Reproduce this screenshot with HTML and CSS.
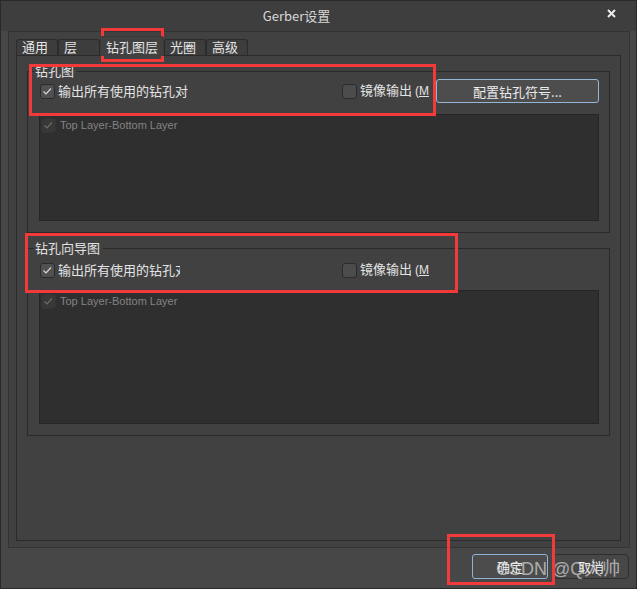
FILE: index.html
```html
<!DOCTYPE html>
<html>
<head>
<meta charset="utf-8">
<link rel="stylesheet" href="styles.css">
</head>
<body>
<div class="stage">
  <div class="win">
    <div class="titlebar">
      <div class="title">Gerber设置</div>
      <div class="close"><svg width="9" height="9" viewBox="0 0 9 9"><path d="M1 1L8 8M8 1L1 8" stroke="#ececec" stroke-width="2" fill="none"/></svg></div>
    </div>
    <div class="outer">
      <div class="tabs">
        <div class="tab">通用</div>
        <div class="tab">层</div>
        <div class="tab wide active">钻孔图层</div>
        <div class="tab">光圈</div>
        <div class="tab">高级</div>
      </div>
      <div class="pane">
        <fieldset class="group g1">
          <legend>钻孔图</legend>
          <div class="inner">
            <div class="row r1">
              <div class="item1">
                <span class="cb on"><svg width="13" height="13" viewBox="0 0 13 13"><path d="M2.5 6.5L5 9L10 3.5" stroke="#d6d6d6" stroke-width="1.2" fill="none"/></svg></span>
                <span class="lbl">输出所有使用的钻孔对</span>
              </div>
              <div class="item2">
                <span class="cb"></span>
                <span class="lbl">镜像输出 <span class="lat">(<u>M</u>)</span></span>
              </div>
              <div class="btn cfg">配置钻孔符号...</div>
            </div>
            <div class="list l1">
              <div class="li">
                <span class="cb dis"><svg width="13" height="13" viewBox="0 0 13 13"><path d="M2.5 6.5L5 9L10 3.5" stroke="#6c6c6c" stroke-width="1.2" fill="none"/></svg></span>
                <span class="litext">Top Layer-Bottom Layer</span>
              </div>
            </div>
          </div>
        </fieldset>
        <fieldset class="group g2">
          <legend>钻孔向导图</legend>
          <div class="inner">
            <div class="row r2">
              <div class="item1">
                <span class="cb on"><svg width="13" height="13" viewBox="0 0 13 13"><path d="M2.5 6.5L5 9L10 3.5" stroke="#d6d6d6" stroke-width="1.2" fill="none"/></svg></span>
                <span class="lbl clip">输出所有使用的钻孔对</span>
              </div>
              <div class="item2">
                <span class="cb"></span>
                <span class="lbl">镜像输出 <span class="lat">(<u>M</u>)</span></span>
              </div>
            </div>
            <div class="list l2">
              <div class="li">
                <span class="cb dis"><svg width="13" height="13" viewBox="0 0 13 13"><path d="M2.5 6.5L5 9L10 3.5" stroke="#6c6c6c" stroke-width="1.2" fill="none"/></svg></span>
                <span class="litext">Top Layer-Bottom Layer</span>
              </div>
            </div>
          </div>
        </fieldset>
      </div>
    </div>
    <div class="footer">
      <div class="btn ok">确定</div>
      <div class="btn cancel">取消</div>
    </div>
  </div>
  <div class="watermark">CSDN @Q大帅</div>
  <div class="mark m-tab"></div>
  <div class="mark m-g1"></div>
  <div class="mark m-g2"></div>
  <div class="mark m-ok"></div>
</div>
</body>
</html>
```
FILE: styles.css
```css
html, body {
  margin: 0;
  padding: 0;
  background: #474747;
}
body {
  font-family: "Noto Sans CJK SC", "Noto Sans", sans-serif;
  font-size: 13px;
  color: #e2e2e2;
}
.stage {
  position: relative;
  width: 637px;
  height: 589px;
  overflow: hidden;
}
.win {
  width: 637px;
  height: 589px;
  box-sizing: border-box;
  border: 1px solid #2a2a2a;
  background: #474747;
  display: flex;
  flex-direction: column;
}
.titlebar {
  height: 30px;
  flex: none;
  display: flex;
  align-items: center;
  background: #3e3e3e;
}
.title {
  flex: 1;
  text-align: center;
  color: #d8d8d8;
  line-height: 16px;
  padding-bottom: 1px;
}
.close {
  width: 44px;
  box-sizing: border-box;
  padding-left: 15px;
  display: flex;
  align-items: center;
  padding-bottom: 5px;
}
.outer {
  flex: none;
  height: 517px;
  box-sizing: border-box;
  margin: 0 6px 0 7px;
  border: 1px solid #333333;
  background: #414141;
  padding: 7px 8px 6px 7px;
  display: flex;
  flex-direction: column;
}
.tabs {
  height: 16px;
  flex: none;
  display: flex;
  align-items: flex-end;
  position: relative;
  z-index: 1;
}
.tab {
  width: 42px;
  height: 16px;
  box-sizing: border-box;
  border: 1px solid #2b2b2b;
  border-bottom: none;
  border-radius: 3px 3px 0 0;
  background: #3d3d3d;
  padding-left: 5px;
  line-height: 14px;
  color: #e4e4e4;
  white-space: nowrap;
}
.tab.wide {
  width: 64px;
}
.tab.active {
  height: 20px;
  margin-bottom: -1px;
  background: #414141;
  border-color: #3a3a3a;
  line-height: 18px;
  padding-top: 1px;
}
.pane {
  flex: 1;
  box-sizing: border-box;
  border: 1px solid #2b2b2b;
  background: #414141;
  padding: 7px 10px 0 10px;
}
.group {
  margin: 0;
  border: 1px solid #2a2a2a;
  padding: 0 10px 11px 6px;
  min-width: 0;
}
.group legend {
  padding: 0 3px 0 1px;
  line-height: 15px;
  height: 16px;
  color: #e2e2e2;
}
.g2 {
  margin-top: 7px;
}
.inner {
  margin-left: 5px;
}
.row {
  display: flex;
  align-items: center;
  height: 24px;
}
.r1 {
  margin-top: 0;
}
.r2 {
  margin-top: 2px;
}
.item1 {
  width: 302px;
  margin-left: 1px;
  display: flex;
  align-items: center;
}
.item2 {
  width: 87px;
  overflow: hidden;
  display: flex;
  align-items: center;
  white-space: nowrap;
}
.cb {
  flex: none;
  width: 15px;
  height: 15px;
  box-sizing: border-box;
  border: 1px solid #2b2b2b;
  border-radius: 3px;
  background: #4c4c4c;
  margin-right: 3px;
  display: flex;
  align-items: center;
  justify-content: center;
}
.cb.on {
  background: #505050;
}
.cb.dis {
  background: #383838;
  border-color: #343434;
  margin-right: 4px;
}
.lbl {
  line-height: 15px;
  padding-bottom: 1px;
  white-space: nowrap;
  color: #e4e4e4;
}
.lbl.clip {
  display: block;
  width: 122px;
  overflow: hidden;
}
.lat {
  font-family: "Liberation Sans", sans-serif;
  font-size: 12px;
}
.btn {
  box-sizing: border-box;
  height: 24px;
  border-radius: 3px;
  display: flex;
  align-items: center;
  justify-content: center;
  color: #ececec;
}
.cfg {
  width: 163px;
  margin-left: 7px;
  border: 1px solid #94b6d8;
  background: #4d4d4d;
}
.list {
  box-sizing: border-box;
  border: 1px solid #262626;
  background: #2f2f2f;
  padding: 2px 0 0 1px;
}
.l1 {
  margin-top: 11px;
  height: 107px;
}
.l2 {
  margin-top: 8px;
  height: 134px;
}
.li {
  display: flex;
  align-items: center;
  height: 16px;
}
.litext {
  font-family: "Liberation Sans", sans-serif;
  font-size: 11px;
  color: #838383;
  line-height: 15px;
}
.footer {
  flex: 1;
  display: flex;
  justify-content: flex-end;
  align-items: flex-start;
  padding: 6px 7px 0 0;
  gap: 5px;
}
.ok, .cancel {
  width: 76px;
  height: 25px;
}
.ok {
  border: 1px solid #8fb3d8;
  background: #4c4c4c;
}
.cancel {
  border: 1px solid #2e2e2e;
  border-radius: 4px;
  background: #474747;
}
.watermark {
  position: absolute;
  left: 496px;
  top: 560px;
  font-family: "Liberation Sans", "Noto Sans CJK SC", sans-serif;
  font-size: 18px;
  line-height: 18px;
  color: rgba(236, 236, 236, 0.62);
  white-space: nowrap;
}
.mark {
  position: absolute;
  box-sizing: border-box;
  border: 3px solid #f23a3a;
}
.m-tab {
  left: 101px;
  top: 28px;
  width: 63px;
  height: 34px;
}
.m-g1 {
  left: 29px;
  top: 64px;
  width: 407px;
  height: 52px;
}
.m-g2 {
  left: 25px;
  top: 233px;
  width: 433px;
  height: 60px;
}
.m-ok {
  left: 447px;
  top: 534px;
  width: 108px;
  height: 51px;
}
```
